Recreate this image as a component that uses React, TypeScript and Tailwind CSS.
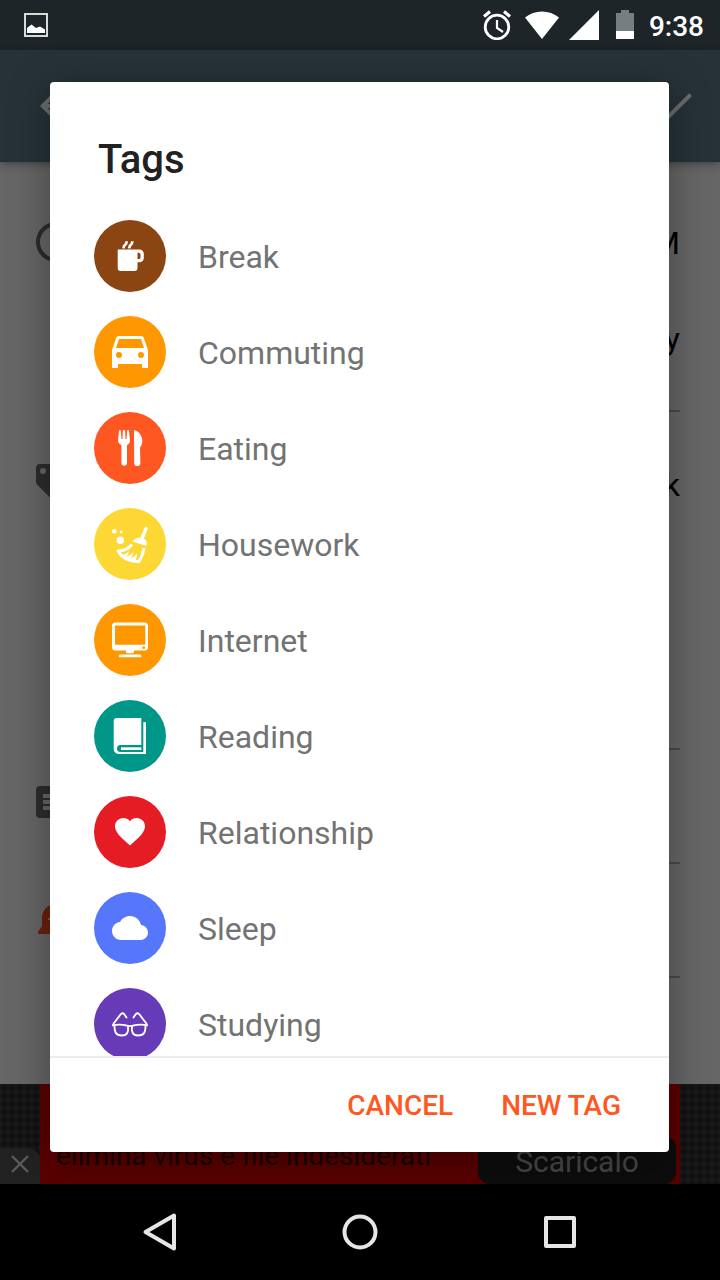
import type { ReactNode } from 'react';

type Tag = { name: string; color: string; icon: ReactNode };

// every tag glyph is drawn on a 72x72 canvas, the size of its circle
const tags: Tag[] = [
  {
    name: 'Break',
    color: 'bg-[#8b4513]',
    icon: (
      <>
        <path d="M23.7 29.5h21.8a4.300 4.300 0 0 1 4.300 4.300v4.200a4.300 4.300 0 0 1-4.300 4.300h-2V48a3 3 0 0 1-3 3H26.700a3 3 0 0 1-3-3zM43.500 32.700v6.400h1.300a1.700 1.700 0 0 0 1.700-1.700v-3a1.700 1.700 0 0 0-1.700-1.700z" fill="#fff" fillRule="evenodd" />
        <path d="M29.500 28.300c.2-2.300.8-3 1.800-3.600s1.300-1.500 1.300-3.500M35.200 28.300c.2-2.300.8-3 1.800-3.600s1.300-1.500 1.300-3.500" fill="none" stroke="#fff" strokeWidth="2.700" />
      </>
    ),
  },
  {
    name: 'Commuting',
    color: 'bg-[#ff9800]',
    icon: (
      <path
        transform="translate(12 10) scale(2)"
        fill="#fff"
        fillRule="evenodd"
        d="M18.92 6.01C18.72 5.42 18.16 5 17.5 5h-11c-.66 0-1.21.42-1.42 1.01L3 12v9h3v-2h12v2h3v-9zM6.5 16a1.5 1.5 0 1 1 0-3 1.5 1.5 0 0 1 0 3zM17.5 16a1.5 1.5 0 1 1 0-3 1.5 1.5 0 0 1 0 3zM5 11l1.5-4.5h11L19 11z"
      />
    ),
  },
  {
    name: 'Eating',
    color: 'bg-[#ff5722]',
    icon: (
      <g fill="#fff">
        <path d="M25 19c0-1.300 1.800-1.300 1.900 0l.6 8h1l.3-8c.1-1.300 2.300-1.300 2.400 0l.3 8h1l.6-8c.1-1.300 1.900-1.300 1.900 0l1 9.500c0 2.500-1.200 3.500-3 4.800V51a2.800 2.800 0 0 1-5.600 0V33.300c-1.900-1.300-3.400-2.300-3.400-4.800z" />
        <path d="M40 18c4.500.5 8.300 6 8.300 10.500 0 3-.8 5.500-2.300 7l.4 15.500a3.100 3.100 0 0 1-6.200 0z" />
      </g>
    ),
  },
  {
    name: 'Housework',
    color: 'bg-[#fdd835]',
    icon: (
      <>
        <g fill="#fff">
          <circle cx="20.3" cy="23.2" r="2.3" />
          <circle cx="27.2" cy="24" r="1.4" />
          <circle cx="26.3" cy="32.3" r="3.7" />
          <path d="M50.500 19.800c.8-1.600 3.800-.6 3.200 1.200l-3.800 9.500c2.500 1.300 3.500 4 2.700 7.500L38.300 33.500c1.800-2.800 4.800-4.200 8-3.800z" />
          <path d="M28 49.500l-2-3c4 1 7-1 9-3.500-.5 2.500-1 4-3 5.500 3-.3 5.500-2 7-4.500 0 3-1 4.500-2 6 2.500-.8 4.500-2.500 6-5 0 3-.5 5.500-1.500 8z" />
        </g>
        <path d="M38 36.500c-3.500 4-8.500 6.500-14 6.500 3.500 6.300 10.500 10.500 20.500 10.800 2.800-3.800 4.600-8.300 5.500-13.800" fill="none" stroke="#fff" strokeWidth="3" strokeLinejoin="round" />
      </>
    ),
  },
  {
    name: 'Internet',
    color: 'bg-[#ff9800]',
    icon: (
      <path
        fill="#fff"
        fillRule="evenodd"
        d="M21.500 18.500h29a3.500 3.500 0 0 1 3.500 3.500v21a3.500 3.500 0 0 1-3.500 3.500H40v1.300a1.500 1.500 0 0 1-1.500 1.500h-5a1.500 1.500 0 0 1-1.500-1.500v-1.300H21.500A3.500 3.500 0 0 1 18 43V22a3.500 3.500 0 0 1 3.500-3.500zM21 21.500v19.300h30.300V21.500zM49.700 42.300a1.400 1.400 0 1 0 0 2.800 1.400 1.400 0 0 0 0-2.800zM26.500 50.600H46a1.300 1.300 0 0 1 1.300 1.300v1.300H25v-1.300a1.300 1.300 0 0 1 1.500-1.300z"
      />
    ),
  },
  {
    name: 'Reading',
    color: 'bg-[#009688]',
    icon: (
      <g fill="#fff">
        <path d="M23 18h24.300v27H26.500a3.500 3.500 0 0 0 0 7h22.800V22.300H52V54H24.500a4.800 4.800 0 0 1-4.800-4.800V21.300A3.300 3.300 0 0 1 23 18z" />
        <path d="M27 47.300h20.300V50H27z" />
      </g>
    ),
  },
  {
    name: 'Relationship',
    color: 'bg-[#e51c23]',
    icon: (
      <path
        transform="translate(18 17.5) scale(1.5)"
        fill="#fff"
        d="M12 21.35l-1.45-1.32C5.4 15.36 2 12.28 2 8.5 2 5.42 4.42 3 7.5 3c1.74 0 3.41.81 4.500 2.090C13.090 3.810 14.760 3 16.500 3 19.580 3 22 5.420 22 8.500c0 3.780-3.400 6.860-8.550 11.540z"
      />
    ),
  },
  {
    name: 'Sleep',
    color: 'bg-[#5677fc]',
    icon: (
      <path
        transform="translate(18 18) scale(1.5)"
        fill="#fff"
        d="M19.35 10.04C18.67 6.59 15.64 4 12 4 9.11 4 6.6 5.64 5.35 8.04 2.34 8.36 0 10.91 0 14c0 3.31 2.69 6 6 6h13c2.76 0 5-2.24 5-5 0-2.64-2.05-4.78-4.65-4.96z"
      />
    ),
  },
  {
    name: 'Studying',
    color: 'bg-[#673ab7]',
    icon: (
      <g fill="none" stroke="#fff" strokeWidth="1.9" strokeLinejoin="round">
        <path d="M19.500 35.800l7-9.300c1.500-2 3-1.500 4 0l2 3M52.500 35.800l-7-9.300c-1.500-2-3-1.500-4 0l-2 3" strokeLinecap="round" />
        <path d="M18 37.300c6-1 11-.8 15 .4 2 .6 4 .6 6 0 4-1.200 9-1.400 15-.4" />
        <path d="M20.500 37.500c0 7 1.500 10 7.500 10 5.500 0 6.800-4 6-9.500M51.500 37.500c0 7-1.500 10-7.500 10-5.500 0-6.800-4-6-9.500" />
      </g>
    ),
  },
];

function StatusBar() {
  return (
    <header className="flex h-[50px] shrink-0 items-center bg-[#1e2528] pl-6 pr-4 text-white">
      <svg width="24" height="24" viewBox="0 0 24 24" aria-hidden="true">
        <rect x="1" y="1" width="22" height="22" fill="none" stroke="#d5dbd5" strokeWidth="2" />
        <path d="M3 20v-5l4.500-3.500L12 15l4-1.500 5 3V20z" fill="#fff" />
      </svg>
      <div className="ml-auto flex items-center">
        <svg width="28" height="30" viewBox="0 0 28 30" className="mr-[14px]" fill="none" stroke="#fff" aria-hidden="true">
          <circle cx="14" cy="17" r="11.8" strokeWidth="2.8" />
          <path d="M1 6.500l6-5M27 6.500l-6-5" strokeWidth="3.200" />
          <path d="M14 10v8l6 4" strokeWidth="2.200" />
        </svg>
        <svg width="34" height="30" viewBox="0 0 34 30" className="mr-[10px]" fill="#fff" aria-hidden="true">
          <path d="M0 7.500C9.500-.5 24.500-.5 34 7.500L17 29z" />
        </svg>
        <svg width="30" height="30" viewBox="0 0 30 30" className="mr-4" fill="#fff" aria-hidden="true">
          <path d="M30 0v30H0z" />
        </svg>
        <svg width="20" height="30" viewBox="0 0 20 30" className="mr-[14px]" aria-hidden="true">
          <path d="M6 0h8v3h5v18H1V3h5z" fill="#787d7f" />
          <path d="M1 21h18v8H1z" fill="#fff" />
        </svg>
        <time className="pt-1 text-[28px] leading-8 font-medium">9:38</time>
      </div>
    </header>
  );
}

function Toolbar() {
  return (
    <div className="z-10 flex h-28 shrink-0 items-center justify-between bg-[#263238] pl-8 pr-[22px] shadow-[0_2px_8px_rgba(0,0,0,0.35)]">
      <button aria-label="Back">
        <svg width="48" height="48" viewBox="0 0 24 24" fill="#6b6b6b">
          <path d="M20 11H7.83l5.59-5.59L12 4l-8 8 8 8 1.41-1.41L7.83 13H20z" />
        </svg>
      </button>
      <button aria-label="Done">
        <svg width="48" height="48" viewBox="0 0 24 24" fill="#6b6b6b">
          <path d="M9 16.17L4.83 12l-1.42 1.41L9 19 21 7l-1.410-1.410z" />
        </svg>
      </button>
    </div>
  );
}

function FormIcon({ children }: { children?: ReactNode }) {
  return (
    <svg width="48" height="48" viewBox="0 0 48 48" fill="#2c2c2c" className="shrink-0" aria-hidden="true">
      {children}
    </svg>
  );
}

// the entry form behind the dialog, already dimmed
function EntryForm() {
  return (
    <main className="flex-1 bg-[#666] pl-8 pr-10 text-[32px] leading-10 text-black">
      <section className="flex pt-8">
        <div className="flex h-24 w-18 items-center">
          <FormIcon>
            <path d="M24 4a20 20 0 1 0 0 40 20 20 0 0 0 0-40zm0 4a16 16 0 1 1 0 32 16 16 0 0 1 0-32z" />
          </FormIcon>
        </div>
        <div className="flex-1 border-b-2 border-[#4a4a4a] pb-6">
          <p className="flex h-24 items-center justify-end pt-0.5">M</p>
          <p className="flex h-24 items-center justify-end pt-0.5">y</p>
        </div>
      </section>
      <section className="flex h-[338px]">
        <div className="w-18 pt-12">
          <FormIcon>
            <path d="M42.800 23.200l-18-18A4 4 0 0 0 22 4H8a4 4 0 0 0-4 4v14c0 1.100.4 2.100 1.200 2.800l18 18a4 4 0 0 0 5.600 0l14-14a4 4 0 0 0 0-5.600zM11 14a3 3 0 1 1 0-6 3 3 0 0 1 0 6z" fillRule="evenodd" />
          </FormIcon>
        </div>
        <div className="flex-1 border-b-2 border-[#4a4a4a] pt-6">
          <p className="flex h-24 items-center justify-end pt-0.5">k</p>
        </div>
      </section>
      <section className="flex h-[114px]">
        <div className="w-18 pt-7">
          <FormIcon>
            <path d="M8 8h32a4 4 0 0 1 4 4v24a4 4 0 0 1-4 4H8a4 4 0 0 1-4-4V12a4 4 0 0 1 4-4zM11 16v4h26v-4zM11 22v4h26v-4zM11 28v4h26v-4z" fillRule="evenodd" />
          </FormIcon>
        </div>
        <div className="flex-1 border-b-2 border-[#4a4a4a]" />
      </section>
      <section className="flex h-[114px]">
        <div className="w-18 pt-8">
          <FormIcon>
            <path d="M6 38v-2l4-6v-8C10 14 16 8 24 8s14 6 14 14v8l4 6v2z" fill="#6b200c" />
            <path d="M16 22h16v2H16z" fill="#666" />
          </FormIcon>
        </div>
        <div className="flex-1 border-b-2 border-[#4a4a4a]" />
      </section>
    </main>
  );
}

function AdBanner() {
  return (
    <aside className="flex h-[100px] shrink-0 bg-[#151515] bg-[radial-gradient(circle,#101010_30%,#1a1a1a_80%)] bg-[length:8px_8px]">
      <div className="flex w-10 items-end">
        <button aria-label="Close ad" className="flex h-9 w-10 items-center justify-center rounded-tr-xl bg-[#222] pb-1">
          <svg width="18" height="18" viewBox="0 0 18 18" stroke="#5c5c5c" strokeWidth="2.4" aria-hidden="true">
            <path d="M1 1l16 16M17 1L1 17" />
          </svg>
        </button>
      </div>
      <div className="flex flex-1 items-end justify-between bg-[#5a0000] pl-4 pr-1">
        <p className="pb-2 text-[28px] leading-10 text-[#1a0000]">elimina virus e file indesiderati</p>
        <button className="h-12 w-[198px] rounded-xl bg-[#0d0d0d] pt-1 text-[30px] leading-8 text-[#484848]">Scaricalo</button>
      </div>
      <div className="w-10" />
    </aside>
  );
}

function NavBar() {
  return (
    <nav className="grid h-24 shrink-0 grid-cols-3 items-center justify-items-center bg-black px-15">
      <button aria-label="Back">
        <svg width="40" height="40" viewBox="0 0 40 40" fill="none" stroke="#e6e6e6" strokeWidth="4" strokeLinejoin="round">
          <path d="M34 3.500v33L5.500 20z" />
        </svg>
      </button>
      <button aria-label="Home">
        <svg width="40" height="40" viewBox="0 0 40 40" fill="none" stroke="#e6e6e6" strokeWidth="4">
          <circle cx="20" cy="20" r="15.5" />
        </svg>
      </button>
      <button aria-label="Recent apps">
        <svg width="40" height="40" viewBox="0 0 40 40" fill="none" stroke="#e6e6e6" strokeWidth="4" strokeLinejoin="round">
          <rect x="6" y="6" width="28" height="28" />
        </svg>
      </button>
    </nav>
  );
}

function TagsDialog() {
  return (
    <div className="absolute inset-0 z-20 px-[50px] pt-[82px] pb-32">
      <div
        role="dialog"
        aria-labelledby="tags-title"
        className="mr-px flex h-full flex-col overflow-hidden rounded-[4px] bg-white shadow-[0_8px_40px_rgba(0,0,0,0.35)]"
      >
        <h1 id="tags-title" className="px-12 pt-[54px] pb-6 text-[40px] leading-12 font-medium text-[#212121]">Tags</h1>
        <ul className="min-h-0 flex-1 overflow-y-auto [scrollbar-width:none]">
          {tags.map((tag) => (
            <li key={tag.name}>
              <button className="flex h-24 w-full items-center gap-8 px-11 text-left text-[32px] leading-10 text-[#737373]">
                <span className={`size-18 shrink-0 rounded-full ${tag.color}`}>
                  <svg width="72" height="72" viewBox="0 0 72 72" aria-hidden="true">{tag.icon}</svg>
                </span>
                <span className="pt-0.5">{tag.name}</span>
              </button>
            </li>
          ))}
        </ul>
        <div className="flex h-24 shrink-0 items-center justify-end gap-12 border-t-2 border-[#ececec] px-12 pt-0.5 text-[28px] leading-8 font-medium text-[#ff5722]">
          <button>CANCEL</button>
          <button>NEW TAG</button>
        </div>
      </div>
    </div>
  );
}

export default function App() {
  return (
    <div className="relative flex min-h-screen flex-col overflow-hidden font-[Roboto,sans-serif]">
      <StatusBar />
      <Toolbar />
      <EntryForm />
      <AdBanner />
      <NavBar />
      <TagsDialog />
    </div>
  );
}
